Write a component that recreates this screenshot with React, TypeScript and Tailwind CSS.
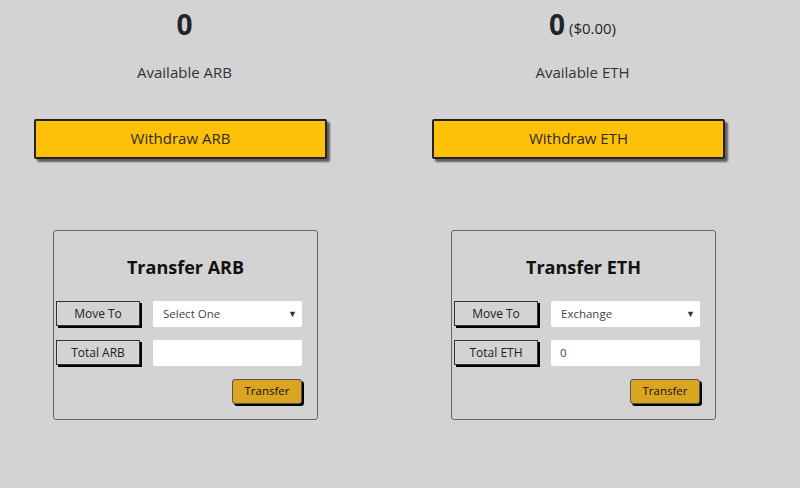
import React from 'react';

const font = { fontFamily: '"Open Sans", "Noto Sans", sans-serif' };

type Side = {
  coin: string;
  extra?: string;
  select: string;
  total: string;
};

const sides: Side[] = [
  { coin: 'ARB', select: 'Select One', total: '' },
  { coin: 'ETH', extra: '($0.00)', select: 'Exchange', total: '0' },
];

function Column({ side }: { side: Side }) {
  return (
    <div className="w-[369px] flex flex-col">
      <div className="h-[38px] flex items-end justify-center text-[#212529]">
        <span className="text-[28px] font-bold leading-none">0</span>
        {side.extra && <span className="ml-[4px] text-[15px] leading-none mb-[2px]">{side.extra}</span>}
      </div>
      <div className="mt-[23px] text-center text-[15px] text-[#333]">Available {side.coin}</div>
      <button className="mt-[35px] ml-[34px] w-[293px] h-[40px] bg-[#ffc107] border-2 border-[#222] rounded-[2px] shadow-[3px_3px_2px_rgba(0,0,0,0.55)] text-[15px] text-[#2b2b2b]">
        Withdraw {side.coin}
      </button>
      <div className="mt-[71px] ml-[53px] w-[265px] h-[190px] border border-[#666] rounded-[3px] pl-[2px] pr-[15px]">
        <div className="mt-[23px] mr-[-13px] text-center text-[18px] font-bold text-[#111]">Transfer {side.coin}</div>
        <div className="mt-[20px] flex items-center">
          <div className="w-[84px] h-[25px] border border-[#333] shadow-[2px_2px_0_#000] flex items-center justify-center text-[12px] text-[#222]">Move To</div>
          <div className="ml-[13px] flex-1 h-[26px] bg-white rounded-[2px] flex items-center justify-between pl-[10px] pr-[5px] text-[11.5px] text-[#444]">
            <span>{side.select}</span>
            <span className="text-[9px] text-[#333]">▼</span>
          </div>
        </div>
        <div className="mt-[13px] flex items-center">
          <div className="w-[84px] h-[25px] border border-[#333] shadow-[2px_2px_0_#000] flex items-center justify-center text-[12px] text-[#222]">Total {side.coin}</div>
          <div className="ml-[13px] flex-1 h-[26px] bg-white rounded-[2px] flex items-center pl-[9px] text-[11.5px] text-[#444]">{side.total}</div>
        </div>
        <div className="mt-[13px] flex justify-end">
          <button className="w-[70px] h-[25px] bg-[#daa520] border border-[#555] rounded-[3px] shadow-[2px_2px_0_#000] text-[11.5px] text-[#111]">Transfer</button>
        </div>
      </div>
    </div>
  );
}

export default function App() {
  return (
    <div className="w-[800px] h-[488px] bg-[#d3d3d3] overflow-hidden" style={font}>
      <div className="flex gap-[29px]">
        {sides.map((s) => (
          <Column key={s.coin} side={s} />
        ))}
      </div>
    </div>
  );
}
